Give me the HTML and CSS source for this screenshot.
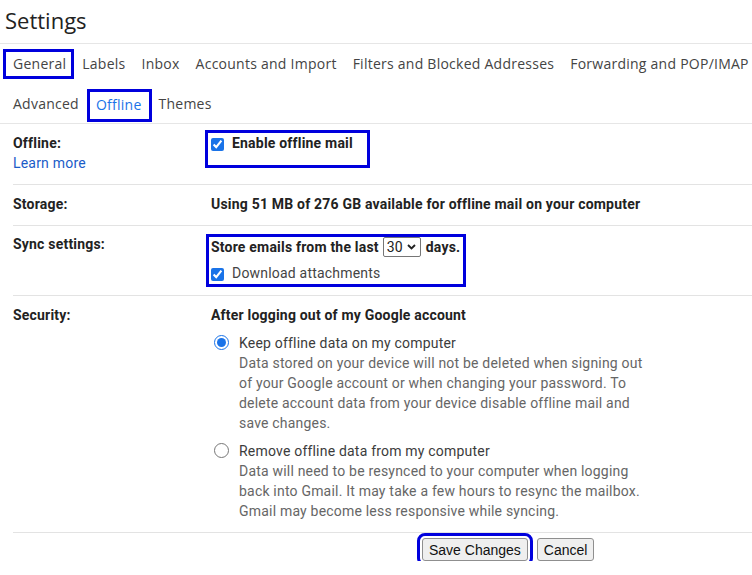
FILE: index.html
```html
<!DOCTYPE html>
<html lang="en">
<head>
<meta charset="utf-8">
<title>Settings</title>
<link rel="stylesheet" href="styles.css">
</head>
<body>
<div class="page">
  <h1 class="title">Settings</h1>
  <nav class="tabs">
    <div class="tab-row">
      <a class="tab boxed boxed-general">General</a>
      <a class="tab">Labels</a>
      <a class="tab">Inbox</a>
      <a class="tab">Accounts and Import</a>
      <a class="tab">Filters and Blocked Addresses</a>
      <a class="tab">Forwarding and POP/IMAP</a>
    </div>
    <div class="tab-row tab-row-second">
      <a class="tab">Advanced</a>
      <a class="tab tab-active boxed boxed-offline">Offline</a>
      <a class="tab">Themes</a>
    </div>
  </nav>

  <div class="rows">
    <div class="row">
      <div class="label">
        <div>Offline:</div>
        <a class="link">Learn more</a>
      </div>
      <div class="value">
        <div class="boxed box-enable">
          <label class="check strong"><input type="checkbox" checked>Enable offline mail</label>
        </div>
      </div>
    </div>

    <div class="row">
      <div class="label">Storage:</div>
      <div class="value strong">Using 51 MB of 276 GB available for offline mail on your computer</div>
    </div>

    <div class="row row-sync">
      <div class="label">Sync settings:</div>
      <div class="value">
        <div class="boxed box-sync">
          <div class="sync-line strong">Store emails from the last
            <span class="select-wrap">
              <select class="days"><option>30</option></select>
              <svg class="chev" width="9" height="6" viewBox="0 0 9 6" aria-hidden="true"><path d="M1 1 L4.5 4.5 L8 1" fill="none" stroke="#222" stroke-width="1.9"/></svg>
            </span>
            days.</div>
          <label class="check check-plain"><input type="checkbox" checked>Download attachments</label>
        </div>
      </div>
    </div>

    <div class="row">
      <div class="label">Security:</div>
      <div class="value">
        <div class="strong">After logging out of my Google account</div>
        <label class="option">
          <input type="radio" name="sec" checked>
          <span class="option-body">
            <span class="option-title">Keep offline data on my computer</span>
            <span class="option-desc">Data stored on your device will not be deleted when signing out of your Google account or when changing your password. To delete account data from your device disable offline mail and save changes.</span>
          </span>
        </label>
        <label class="option">
          <input type="radio" name="sec">
          <span class="option-body">
            <span class="option-title">Remove offline data from my computer</span>
            <span class="option-desc">Data will need to be resynced to your computer when logging back into Gmail. It may take a few hours to resync the mailbox. Gmail may become less responsive while syncing.</span>
          </span>
        </label>
      </div>
    </div>
  </div>

  <div class="actions">
    <button class="btn btn-save">Save Changes</button>
    <button class="btn">Cancel</button>
  </div>
</div>
</body>
</html>
```

FILE: styles.css
```css
* { box-sizing: border-box; }

html, body {
  margin: 0;
  padding: 0;
  background: #ffffff;
}

body {
  font-family: Roboto, "Liberation Sans", Arial, sans-serif;
  font-size: 14px;
  letter-spacing: 0.2px;
  color: #222222;
  overflow: hidden;
}

.page {
  width: 752px;
}

.title {
  margin: 0;
  height: 44px;
  padding: 5px 0 0 5px;
  font-family: "Open Sans", Roboto, sans-serif;
  font-size: 22px;
  font-weight: 400;
  letter-spacing: 0;
  line-height: 30px;
  color: #222222;
  border-bottom: 1px solid #e6e6e6;
}

.tabs {
  border-bottom: 1px solid #e6e6e6;
}

.tab-row {
  display: flex;
  align-items: center;
  gap: 16px;
  height: 40px;
  padding-left: 13px;
  white-space: nowrap;
  overflow: hidden;
}

.tab-row-second {
  height: 39px;
  gap: 17px;
}

.tab {
  font-family: "Open Sans", Roboto, sans-serif;
  font-size: 14px;
  line-height: 24px;
  color: #444444;
  letter-spacing: 0.25px;
}

.tab-active {
  color: #1a73e8;
}

.boxed {
  outline: 3px solid #0000dd;
}

.boxed-general {
  padding: 0 5px 0 7px;
  margin: 0 -5px 0 -7px;
}

.boxed-offline {
  padding: 1px 7px 2px 6px;
  margin: 3px -7px 0 -6px;
}

.rows {
  margin-left: 13px;
}

.row {
  display: grid;
  grid-template-columns: 198px 1fr;
  padding: 9px 0 11px;
  border-bottom: 1px solid #e3e3e3;
  line-height: 20px;
}

.row-sync {
  padding-top: 8px;
}

.label {
  font-weight: 700;
  color: #222222;
}

.link {
  display: block;
  font-weight: 400;
  color: #1a5cc8;
}

.strong {
  font-weight: 700;
  color: #222222;
}

.value {
  min-width: 0;
}

.check {
  display: flex;
  align-items: center;
  height: 20px;
}

.check input {
  width: 13px;
  height: 13px;
  margin: 3px 8px 0 0;
  accent-color: #1a73e8;
}

.check-plain {
  font-weight: 400;
  color: #444444;
  margin-top: 6px;
}

.box-enable {
  display: inline-block;
  vertical-align: top;
  padding: 0 14px 12px 3px;
  margin-left: -3px;
}

.box-sync {
  display: inline-block;
  vertical-align: top;
  padding: 0 3px 1px 2px;
  margin: 3px 0 0 -2px;
}

.sync-line {
  display: flex;
  align-items: center;
  height: 20px;
}

.select-wrap {
  position: relative;
  display: inline-flex;
  margin: 0 5px 0 4px;
}

.days {
  appearance: none;
  -webkit-appearance: none;
  width: 38px;
  height: 20px;
  margin: 0;
  padding: 0 0 0 3px;
  font-family: Roboto, "Liberation Sans", sans-serif;
  font-size: 14px;
  line-height: 18px;
  color: #222222;
  border: 1px solid #767676;
  border-radius: 2px;
  background: #ffffff;
}

.chev {
  position: absolute;
  right: 5px;
  top: 7px;
  pointer-events: none;
}

.option {
  display: grid;
  grid-template-columns: 28px 1fr;
  margin-top: 8px;
}

.option input {
  width: 15px;
  height: 15px;
  margin: 2px 0 0 3px;
  accent-color: #1a73e8;
}

.option-body {
  display: flex;
  flex-direction: column;
  max-width: 412px;
}

.option-title {
  color: #3c3c3c;
}

.option-desc {
  color: #666666;
}

.actions {
  display: flex;
  gap: 9px;
  padding: 5px 0 0 422px;
}

.btn {
  height: 23px;
  padding: 0 6px;
  font-family: "Liberation Sans", Arial, sans-serif;
  font-size: 14px;
  letter-spacing: 0;
  color: #111111;
  background: #efefef;
  border: 1px solid #8f8f8f;
  border-radius: 3px;
}

.btn-save {
  outline: 3px solid #0000dd;
  outline-offset: 2px;
}
```
